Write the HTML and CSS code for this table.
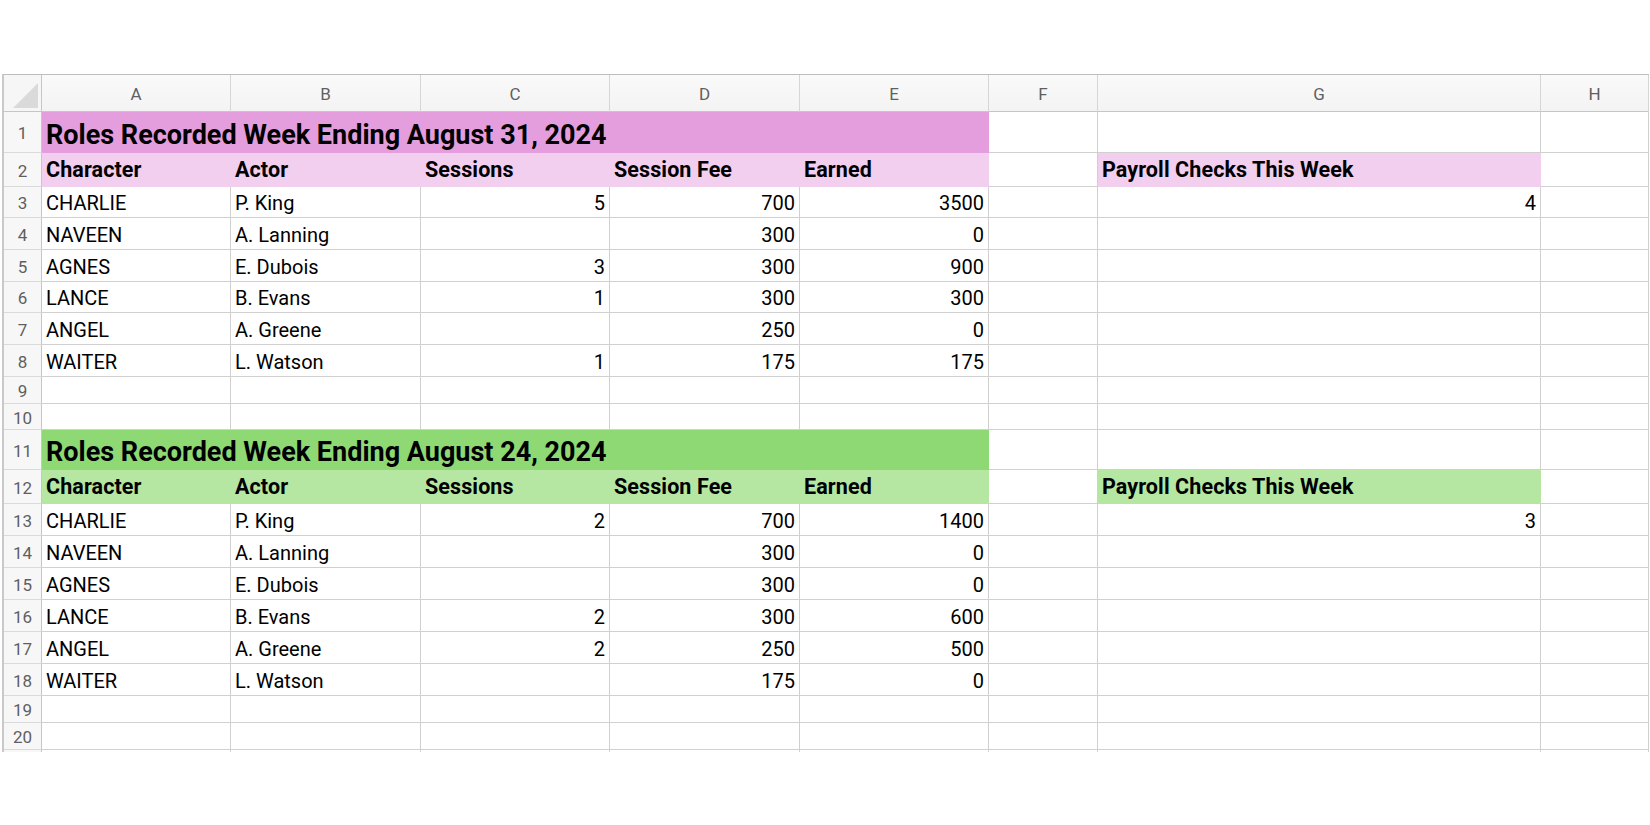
FILE: index.html
```html
<!DOCTYPE html>
<html lang="en">
<head>
<meta charset="utf-8">
<title>Roles Recorded</title>
<link rel="stylesheet" href="styles.css">
</head>
<body>
<div class="sheet">
  <div class="corner"></div>
  <div class="ch">A</div><div class="ch">B</div><div class="ch">C</div><div class="ch">D</div><div class="ch">E</div><div class="ch">F</div><div class="ch">G</div><div class="ch">H</div>

  <div class="rh">1</div>
  <div class="c title pink-dark span5">Roles Recorded Week Ending August 31, 2024</div>
  <div class="c"></div><div class="c"></div><div class="c"></div>

  <div class="rh">2</div>
  <div class="c hd pink">Character</div><div class="c hd pink">Actor</div><div class="c hd pink">Sessions</div><div class="c hd pink">Session Fee</div><div class="c hd pink">Earned</div>
  <div class="c"></div><div class="c hd pink">Payroll Checks This Week</div><div class="c"></div>

  <div class="rh">3</div>
  <div class="c">CHARLIE</div><div class="c">P. King</div><div class="c num">5</div><div class="c num">700</div><div class="c num">3500</div><div class="c"></div><div class="c num">4</div><div class="c"></div>
  <div class="rh">4</div>
  <div class="c">NAVEEN</div><div class="c">A. Lanning</div><div class="c num"></div><div class="c num">300</div><div class="c num">0</div><div class="c"></div><div class="c"></div><div class="c"></div>
  <div class="rh">5</div>
  <div class="c">AGNES</div><div class="c">E. Dubois</div><div class="c num">3</div><div class="c num">300</div><div class="c num">900</div><div class="c"></div><div class="c"></div><div class="c"></div>
  <div class="rh">6</div>
  <div class="c">LANCE</div><div class="c">B. Evans</div><div class="c num">1</div><div class="c num">300</div><div class="c num">300</div><div class="c"></div><div class="c"></div><div class="c"></div>
  <div class="rh">7</div>
  <div class="c">ANGEL</div><div class="c">A. Greene</div><div class="c num"></div><div class="c num">250</div><div class="c num">0</div><div class="c"></div><div class="c"></div><div class="c"></div>
  <div class="rh">8</div>
  <div class="c">WAITER</div><div class="c">L. Watson</div><div class="c num">1</div><div class="c num">175</div><div class="c num">175</div><div class="c"></div><div class="c"></div><div class="c"></div>
  <div class="rh">9</div>
  <div class="c"></div><div class="c"></div><div class="c"></div><div class="c"></div><div class="c"></div><div class="c"></div><div class="c"></div><div class="c"></div>
  <div class="rh">10</div>
  <div class="c"></div><div class="c"></div><div class="c"></div><div class="c"></div><div class="c"></div><div class="c"></div><div class="c"></div><div class="c"></div>

  <div class="rh">11</div>
  <div class="c title green-dark span5">Roles Recorded Week Ending August 24, 2024</div>
  <div class="c"></div><div class="c"></div><div class="c"></div>

  <div class="rh">12</div>
  <div class="c hd green">Character</div><div class="c hd green">Actor</div><div class="c hd green">Sessions</div><div class="c hd green">Session Fee</div><div class="c hd green">Earned</div>
  <div class="c"></div><div class="c hd green">Payroll Checks This Week</div><div class="c"></div>

  <div class="rh">13</div>
  <div class="c">CHARLIE</div><div class="c">P. King</div><div class="c num">2</div><div class="c num">700</div><div class="c num">1400</div><div class="c"></div><div class="c num">3</div><div class="c"></div>
  <div class="rh">14</div>
  <div class="c">NAVEEN</div><div class="c">A. Lanning</div><div class="c num"></div><div class="c num">300</div><div class="c num">0</div><div class="c"></div><div class="c"></div><div class="c"></div>
  <div class="rh">15</div>
  <div class="c">AGNES</div><div class="c">E. Dubois</div><div class="c num"></div><div class="c num">300</div><div class="c num">0</div><div class="c"></div><div class="c"></div><div class="c"></div>
  <div class="rh">16</div>
  <div class="c">LANCE</div><div class="c">B. Evans</div><div class="c num">2</div><div class="c num">300</div><div class="c num">600</div><div class="c"></div><div class="c"></div><div class="c"></div>
  <div class="rh">17</div>
  <div class="c">ANGEL</div><div class="c">A. Greene</div><div class="c num">2</div><div class="c num">250</div><div class="c num">500</div><div class="c"></div><div class="c"></div><div class="c"></div>
  <div class="rh">18</div>
  <div class="c">WAITER</div><div class="c">L. Watson</div><div class="c num"></div><div class="c num">175</div><div class="c num">0</div><div class="c"></div><div class="c"></div><div class="c"></div>
  <div class="rh">19</div>
  <div class="c"></div><div class="c"></div><div class="c"></div><div class="c"></div><div class="c"></div><div class="c"></div><div class="c"></div><div class="c"></div>
  <div class="rh">20</div>
  <div class="c"></div><div class="c"></div><div class="c"></div><div class="c"></div><div class="c"></div><div class="c"></div><div class="c"></div><div class="c"></div>

  <div class="stub rhs"></div><div class="stub"></div><div class="stub"></div><div class="stub"></div><div class="stub"></div><div class="stub"></div><div class="stub"></div><div class="stub"></div><div class="stub"></div>
</div>
</body>
</html>
```
FILE: styles.css
```css
html, body {
  margin: 0;
  padding: 0;
  background: #ffffff;
}

body {
  font-family: Roboto, "Liberation Sans", sans-serif;
  color: #000;
}

.sheet {
  margin: 74px 0 0 2px;
  border-top: 1px solid #bdbdbd;
  border-left: 2px solid #c9c9c9;
  display: grid;
  grid-template-columns: 38px 189px 190px 189px 190px 189px 109px 443px 108px;
  grid-template-rows: 37px 41px 34px 31px 32px 32px 31px 32px 32px 27px 26px 40px 34px 32px 32px 32px 32px 32px 32px 27px 27px 2px;
  width: 1645px;
}

.sheet > div {
  box-sizing: border-box;
  min-width: 0;
}

.corner {
  position: relative;
  background: #f6f6f6;
  border-right: 1px solid #c6c6c6;
  border-bottom: 1px solid #c6c6c6;
}

.corner::after {
  content: "";
  position: absolute;
  right: 3px;
  bottom: 3px;
  width: 25px;
  height: 25px;
  background: #dadada;
  clip-path: polygon(100% 0, 100% 100%, 0 100%);
}

.ch {
  background: linear-gradient(#fafafa, #f3f3f3);
  border-right: 1px solid #d6d6d6;
  border-bottom: 1px solid #c6c6c6;
  display: flex;
  align-items: center;
  justify-content: center;
  padding-top: 2px;
  font-size: 17px;
  color: #5f5f5f;
  line-height: 1;
}

.rh {
  background: #f7f7f7;
  border-right: 1px solid #c6c6c6;
  border-bottom: 1px solid #dadada;
  display: flex;
  align-items: center;
  justify-content: center;
  padding-top: 3px;
  font-size: 17px;
  color: #5f5f5f;
  line-height: 1;
}

.c {
  border-right: 1px solid #d0d0d0;
  border-bottom: 1px solid #d0d0d0;
  display: flex;
  align-items: flex-end;
  padding: 0 4px 4px 4px;
  font-size: 20px;
  line-height: 20px;
  white-space: nowrap;
  overflow: hidden;
}

.num {
  justify-content: flex-end;
}

.title {
  font-size: 27px;
  line-height: 27px;
  font-weight: 700;
  padding-bottom: 3px;
}

.span5 {
  grid-column: span 5;
}

.hd {
  font-size: 21.5px;
  line-height: 21.5px;
  font-weight: 700;
  padding-bottom: 6px;
  letter-spacing: 0.1px;
}

.pink-dark {
  background: #e49edd;
  border-color: #e49edd;
}

.pink {
  background: #f2ceef;
  border-color: #f2ceef;
}

.green-dark {
  background: #8ed973;
  border-color: #8ed973;
}

.green {
  background: #b5e6a2;
  border-color: #b5e6a2;
}

.stub {
  border-right: 1px solid #d0d0d0;
}

.stub.rhs {
  background: #f7f7f7;
  border-right-color: #c6c6c6;
}
```
